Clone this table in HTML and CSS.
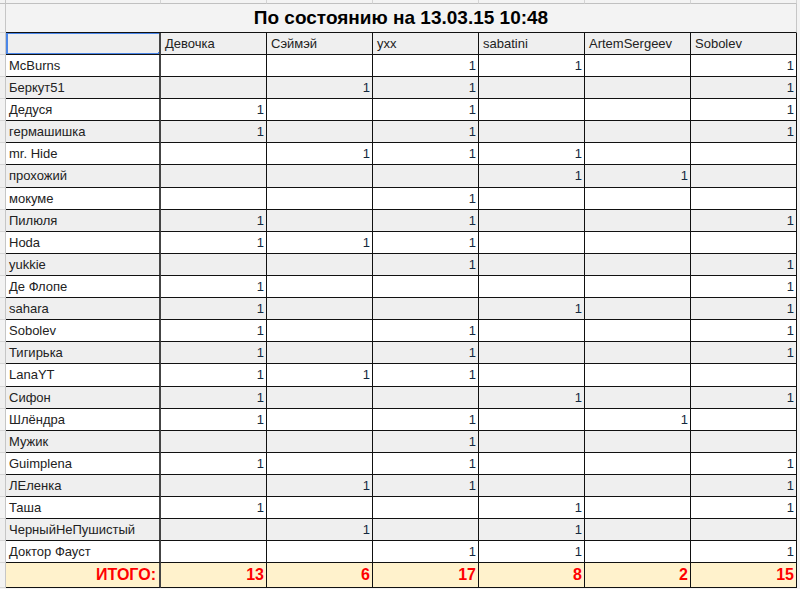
FILE: index.html
```html
<!DOCTYPE html>
<html lang="ru">
<head>
<meta charset="utf-8">
<title>По состоянию на 13.03.15 10:48</title>
<link rel="stylesheet" href="styles.css">
</head>
<body>
<table class="sheet">
  <colgroup>
    <col class="c-rh"><col class="c-name"><col class="c-val"><col class="c-val"><col class="c-val"><col class="c-val"><col class="c-val"><col class="c-val">
  </colgroup>
  <tr class="r-top"><td class="rh"></td><td></td><td></td><td></td><td></td><td></td><td></td><td></td></tr>
  <tr class="r-title"><td class="rh"></td><td class="title" colspan="7">По состоянию на 13.03.15 10:48</td></tr>
  <tr class="alt"><td class="rh"></td><td class="nm sel"></td><td class="hd">Девочка</td><td class="hd">Сэймэй</td><td class="hd">yxx</td><td class="hd">sabatini</td><td class="hd">ArtemSergeev</td><td class="hd">Sobolev</td></tr>
  <tr><td class="rh"></td><td class="nm">McBurns</td><td class="n"></td><td class="n"></td><td class="n">1</td><td class="n">1</td><td class="n"></td><td class="n">1</td></tr>
  <tr class="alt"><td class="rh"></td><td class="nm">Беркут51</td><td class="n"></td><td class="n">1</td><td class="n">1</td><td class="n"></td><td class="n"></td><td class="n">1</td></tr>
  <tr><td class="rh"></td><td class="nm">Дедуся</td><td class="n">1</td><td class="n"></td><td class="n">1</td><td class="n"></td><td class="n"></td><td class="n">1</td></tr>
  <tr class="alt"><td class="rh"></td><td class="nm">гермашишка</td><td class="n">1</td><td class="n"></td><td class="n">1</td><td class="n"></td><td class="n"></td><td class="n">1</td></tr>
  <tr><td class="rh"></td><td class="nm">mr. Hide</td><td class="n"></td><td class="n">1</td><td class="n">1</td><td class="n">1</td><td class="n"></td><td class="n"></td></tr>
  <tr class="alt tall"><td class="rh"></td><td class="nm">прохожий</td><td class="n"></td><td class="n"></td><td class="n"></td><td class="n">1</td><td class="n">1</td><td class="n"></td></tr>
  <tr><td class="rh"></td><td class="nm">мокуме</td><td class="n"></td><td class="n"></td><td class="n">1</td><td class="n"></td><td class="n"></td><td class="n"></td></tr>
  <tr class="alt"><td class="rh"></td><td class="nm">Пилюля</td><td class="n">1</td><td class="n"></td><td class="n">1</td><td class="n"></td><td class="n"></td><td class="n">1</td></tr>
  <tr><td class="rh"></td><td class="nm">Hoda</td><td class="n">1</td><td class="n">1</td><td class="n">1</td><td class="n"></td><td class="n"></td><td class="n"></td></tr>
  <tr class="alt"><td class="rh"></td><td class="nm">yukkie</td><td class="n"></td><td class="n"></td><td class="n">1</td><td class="n"></td><td class="n"></td><td class="n">1</td></tr>
  <tr><td class="rh"></td><td class="nm">Де Флопе</td><td class="n">1</td><td class="n"></td><td class="n"></td><td class="n"></td><td class="n"></td><td class="n">1</td></tr>
  <tr class="alt"><td class="rh"></td><td class="nm">sahara</td><td class="n">1</td><td class="n"></td><td class="n"></td><td class="n">1</td><td class="n"></td><td class="n">1</td></tr>
  <tr><td class="rh"></td><td class="nm">Sobolev</td><td class="n">1</td><td class="n"></td><td class="n">1</td><td class="n"></td><td class="n"></td><td class="n">1</td></tr>
  <tr class="alt"><td class="rh"></td><td class="nm">Тигирька</td><td class="n">1</td><td class="n"></td><td class="n">1</td><td class="n"></td><td class="n"></td><td class="n">1</td></tr>
  <tr class="tall"><td class="rh"></td><td class="nm">LanaYT</td><td class="n">1</td><td class="n">1</td><td class="n">1</td><td class="n"></td><td class="n"></td><td class="n"></td></tr>
  <tr class="alt"><td class="rh"></td><td class="nm">Сифон</td><td class="n">1</td><td class="n"></td><td class="n"></td><td class="n">1</td><td class="n"></td><td class="n">1</td></tr>
  <tr><td class="rh"></td><td class="nm">Шлёндра</td><td class="n">1</td><td class="n"></td><td class="n">1</td><td class="n"></td><td class="n">1</td><td class="n"></td></tr>
  <tr class="alt"><td class="rh"></td><td class="nm">Мужик</td><td class="n"></td><td class="n"></td><td class="n">1</td><td class="n"></td><td class="n"></td><td class="n"></td></tr>
  <tr><td class="rh"></td><td class="nm">Guimplena</td><td class="n">1</td><td class="n"></td><td class="n">1</td><td class="n"></td><td class="n"></td><td class="n">1</td></tr>
  <tr class="alt"><td class="rh"></td><td class="nm">ЛЕленка</td><td class="n"></td><td class="n">1</td><td class="n">1</td><td class="n"></td><td class="n"></td><td class="n">1</td></tr>
  <tr><td class="rh"></td><td class="nm">Таша</td><td class="n">1</td><td class="n"></td><td class="n"></td><td class="n">1</td><td class="n"></td><td class="n">1</td></tr>
  <tr class="alt"><td class="rh"></td><td class="nm">ЧерныйНеПушистый</td><td class="n"></td><td class="n">1</td><td class="n"></td><td class="n">1</td><td class="n"></td><td class="n"></td></tr>
  <tr><td class="rh"></td><td class="nm">Доктор Фауст</td><td class="n"></td><td class="n"></td><td class="n">1</td><td class="n">1</td><td class="n"></td><td class="n">1</td></tr>
  <tr class="r-total"><td class="rh"></td><td class="tl">ИТОГО:</td><td class="tn">13</td><td class="tn">6</td><td class="tn">17</td><td class="tn">8</td><td class="tn">2</td><td class="tn">15</td></tr>
</table>
</body>
</html>
```
FILE: styles.css
```css
html, body {
  margin: 0;
  padding: 0;
  background: #f3f3f3;
}
body {
  font-family: "Liberation Sans", Arial, sans-serif;
  font-size: 13px;
  color: #222;
}
.sheet {
  border-collapse: separate;
  border-spacing: 0;
  table-layout: fixed;
  width: 797px;
  background: #fff;
}
.c-rh { width: 6px; }
.c-name { width: 155px; }
.c-val { width: 106px; }

.sheet td {
  box-sizing: border-box;
  height: 22px;
  padding: 0 3px;
  border-right: 1px solid #111;
  border-bottom: 1px solid #111;
  white-space: nowrap;
  overflow: hidden;
  line-height: 20px;
  vertical-align: middle;
}
.sheet tr.tall td { height: 23px; }
.sheet tr.alt td { background: #efefef; }

.sheet td.rh {
  padding: 0;
  background: #f3f3f3;
  border-right: 1px solid #c6c6c6;
  border-bottom: 1px solid #d6d6d6;
}

.r-top td {
  height: 4px;
  font-size: 0;
  line-height: 0;
  background: #f3f3f3;
  border-right: 1px solid #d4d4d4;
  border-bottom: 1px solid #c0c0c0;
}
.sheet .r-top td.rh { border-bottom: 1px solid #c0c0c0; }

.r-title td.title {
  height: 29px;
  background: #f3f3f3;
  text-align: center;
  font-size: 19px;
  font-weight: bold;
  color: #000;
  line-height: 28px;
  border-right: 1px solid #c6c6c6;
}

.sheet td.nm {
  text-align: left;
  border-right: 2px solid #444;
}
.sheet td.hd {
  text-align: left;
  padding-left: 4px;
}
.sheet td.n {
  text-align: right;
  color: #13283d;
  padding-right: 2px;
}

.sheet td.sel {
  position: relative;
  background: #fff;
}
.sheet td.sel::after {
  content: "";
  position: absolute;
  left: 0;
  top: -1px;
  right: -2px;
  bottom: -1px;
  border: 2px solid #4a86e8;
}
.sheet td.sel::before {
  content: "";
  position: absolute;
  right: -5px;
  bottom: -4px;
  width: 6px;
  height: 6px;
  background: #4a86e8;
  z-index: 2;
}

.r-total td {
  height: 25px;
  background: #fff2cc;
  color: #ff0000;
  font-weight: bold;
  font-size: 16px;
  text-align: right;
  border-bottom: 1px solid #111;
}
.sheet .r-total td.tl { border-right: 2px solid #444; }
.sheet .r-total td.tn { padding-right: 2px; }
.sheet .r-total td.rh { background: #f3f3f3; }
```
